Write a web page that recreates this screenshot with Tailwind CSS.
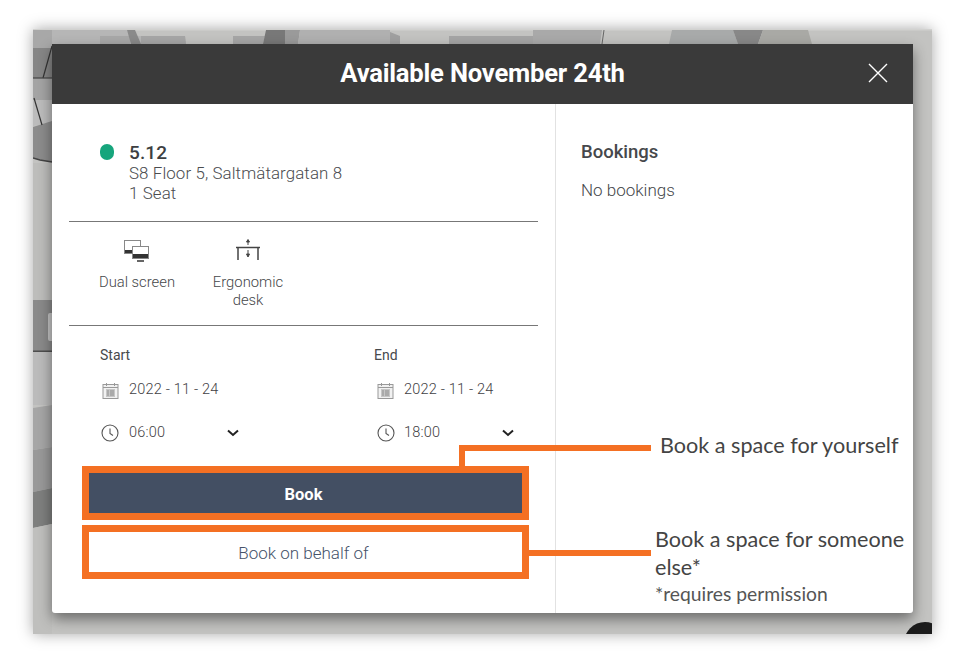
<!DOCTYPE html>
<html lang="en">
  <head>
    <meta charset="UTF-8" />
    <meta name="viewport" content="width=device-width, initial-scale=1.0" />
    <title>Available November 24th</title>
    <script src="https://cdn.jsdelivr.net/npm/@tailwindcss/browser@4"></script>
  </head>
  <body class="bg-white w-[964px] h-[658px] overflow-hidden pl-[33px] pt-[29px] font-['Roboto',sans-serif] text-[#3f3f3f]">
    <!-- screenshot frame, floor plan behind the dialog -->
    <div class="relative w-[899px] h-[605px] bg-[#c2c1bf] shadow-[0_0_14px_rgba(0,0,0,0.35)]">
      <svg class="absolute inset-0" width="899" height="605" viewBox="33 29 899 605">
        <rect x="33" y="29" width="899" height="605" fill="#c3c3c1" />
        <rect x="33" y="29" width="899" height="1.500" fill="#d2d2d0" />
        <polygon points="33,30 127,30 130,36 141,36 185,36 186,44 33,44" fill="#b6b6b6" />
        <polygon points="100,36 130,36 130,44 100,44" fill="#a8a8a8" />
        <polygon points="127,30 135,30 141,44 131,44" fill="#8a8a8a" />
        <polygon points="141,36 185,36 186,44 141,44" fill="#a6a6a6" />
        <polygon points="233,36 265,36 263,44 233,44" fill="#a6a6a6" />
        <polygon points="266,30 285,30 285,44 263,44" fill="#787878" />
        <polygon points="285,30 300,30 298,44 285,44" fill="#9a9a9a" />
        <polygon points="300,30 390,30 390,44 298,44" fill="#b0b0b0" />
        <polygon points="390,32 400,36 400,44 390,44" fill="#a0a0a0" />
        <polygon points="449,36 533,36 533,44 449,44" fill="#a5a5a5" />
        <polygon points="533,30 602,30 600,44 533,44" fill="#a9a9a9" />
        <line x1="604" y1="30" x2="602" y2="44" stroke="#666" stroke-width="1" />
        <polygon points="672,30 733,30 738,44 669,44" fill="#a8aaaa" />
        <polygon points="733,30 763,30 758,44 738,44" fill="#888888" />
        <polygon points="763,30 808,30 812,44 758,44" fill="#a9a9a5" />
        <rect x="33" y="30" width="19" height="18" fill="#a8a8a8" />
        <rect x="33" y="48" width="19" height="30" fill="#868686" />
        <polygon points="33,78 52,78 52,100 33,100" fill="#a4a4a4" />
        <polygon points="33,100 52,100 52,122 33,126" fill="#bcbcbc" />
        <line x1="52" y1="46" x2="43" y2="78" stroke="#333" stroke-width="1.200" />
        <line x1="33" y1="78" x2="52" y2="78" stroke="#444" stroke-width="1.200" />
        <polygon points="33,127 52,121 52,162 40,160 33,158" fill="#8c8c8c" />
        <line x1="34" y1="98" x2="42" y2="125" stroke="#333" stroke-width="1.200" />
        <polyline points="33,158 40,160 52,162" fill="none" stroke="#444" stroke-width="1.500" />
        <rect x="33" y="163" width="19" height="137" fill="#bdbdbb" />
        <rect x="33" y="300" width="19" height="51" fill="#8a8a8a" />
        <rect x="48" y="313" width="6" height="28" rx="2" fill="#c4c4c4" />
        <rect x="33" y="350.500" width="19" height="1.500" fill="#4e4e4e" />
        <rect x="33" y="352" width="19" height="53" fill="#bbbbbb" />
        <polygon points="33,408 52,405 52,447 33,450" fill="#a6a6a6" />
        <polygon points="33,450 52,447 52,488 33,492" fill="#999999" />
        <polygon points="33,492 52,488 52,524 33,528" fill="#7e7f7e" />
        <polygon points="33,528 52,524 52,634 33,634" fill="#bfbfbd" />
        <circle cx="925" cy="643" r="21" fill="#1c1c1c" />
      </svg>

      <!-- dialog -->
      <div class="absolute left-[19px] top-[15px] w-[861px] h-[569px] rounded-b-[3px] bg-white shadow-[0_6px_14px_rgba(0,0,0,0.45)] flex flex-col">
        <header class="relative h-[60px] shrink-0 bg-[#3a3a3a] flex items-center justify-center pb-[1px]">
          <h1 class="text-[25.600px] font-bold text-white tracking-[-0.2px]">Available November 24th</h1>
          <button class="absolute right-[25px] top-[19px]">
            <svg class="block" width="20" height="20" viewBox="0 0 20 20" fill="none" stroke="#fff" stroke-width="1.400"><path d="M1 1l18 18M19 1L1 19" /></svg>
          </button>
        </header>

        <div class="flex flex-1 min-h-0">
          <!-- left column -->
          <section class="w-[504px] border-r border-[#e2e2e2] pl-[17px]">
            <div class="w-[469px]">
              <div class="flex h-[118px] border-b border-[#777] pl-[31px] pt-[39px]">
                <span class="w-[14px] h-[16px] mt-[1px] rounded-full bg-[#16a57c]"></span>
                <div class="ml-[15px] leading-[20px] tracking-[0.1px] text-[#4a4c4f]">
                  <div class="text-[19px] font-medium text-[#3d3f42]">5.12</div>
                  <div class="text-[16.900px] font-light">S8 Floor 5, Saltmätargatan 8</div>
                  <div class="text-[16.900px] font-light">1 Seat</div>
                </div>
              </div>

              <div class="flex h-[104px] border-b border-[#777] text-[14.800px] leading-[18px] font-light text-[#45474a] text-center">
                <div class="w-[136px] pt-[18px] flex flex-col items-center">
                  <svg width="26" height="22" viewBox="0 0 26 22" fill="none">
                    <rect x="0.500" y="0.500" width="16" height="13" fill="#fff" stroke="#888" />
                    <rect x="1" y="10" width="15" height="3" fill="#333" />
                    <rect x="8.500" y="6.500" width="16" height="12" fill="#fff" stroke="#888" />
                    <rect x="9" y="14" width="15" height="4" fill="#333" />
                    <path d="M13 21h7" stroke="#333" stroke-width="1.500" />
                  </svg>
                  <span class="mt-[11px] whitespace-nowrap">Dual screen</span>
                </div>
                <div class="w-[86px] pt-[16px] flex flex-col items-center">
                  <svg width="26" height="24" viewBox="0 0 26 24" fill="none" stroke="#444">
                    <path d="M1 9.500h24" stroke-width="1.500" />
                    <path d="M3 10v12M23 10v12" stroke-width="1.500" />
                    <path d="M13 2v5M13 12v6" />
                    <path d="M11.500 4L13 1.500 14.500 4zM11.500 16l1.500 3 1.500-3z" fill="#444" />
                  </svg>
                  <span class="mt-[11px]">Ergonomic<br />desk</span>
                </div>
              </div>

              <div class="flex pl-[31px] pt-[20px] text-[14.500px] font-light text-[#3f4144]">
                <div class="w-[274px]">
                  <div class="leading-[18px] text-[14px] font-normal text-[#47494c]">Start</div>
                  <div class="flex items-center gap-[10px] mt-[16px] h-[20px] pl-[2px]">
                    <svg width="17" height="17" viewBox="0 0 17 17" fill="none" stroke="#999"><rect x="1" y="2.500" width="15" height="14" fill="#f1f1f1" /><path d="M1 5.500h15M4.500 1v3M12.500 1v3" /><path d="M4 8h9M4 10h9M4 12h9M4 14h9M6 8v6M9 8v6M11 8v6" stroke="#777" stroke-width="0.700" /></svg>
                    <span class="tracking-[0.2px]">2022 - 11 - 24</span>
                  </div>
                  <div class="flex items-center mt-[23px] h-[20px] pl-[1px]">
                    <svg width="18" height="18" viewBox="0 0 18 18" fill="none" stroke="#555" stroke-width="1.100"><circle cx="9" cy="9" r="8" /><path d="M9 4.500V9.500l3 2" /></svg>
                    <span class="ml-[10px] w-[98px] tracking-[0.2px]">06:00</span>
                    <svg width="12" height="8" viewBox="0 0 12 8" fill="none" stroke="#222" stroke-width="2"><path d="M1 1.500l5 4.500 5-4.500" /></svg>
                  </div>
                </div>
                <div>
                  <div class="leading-[18px] text-[14px] font-normal text-[#47494c]">End</div>
                  <div class="flex items-center gap-[10px] mt-[16px] h-[20px] pl-[3px]">
                    <svg width="17" height="17" viewBox="0 0 17 17" fill="none" stroke="#999"><rect x="1" y="2.500" width="15" height="14" fill="#f1f1f1" /><path d="M1 5.500h15M4.500 1v3M12.500 1v3" /><path d="M4 8h9M4 10h9M4 12h9M4 14h9M6 8v6M9 8v6M11 8v6" stroke="#777" stroke-width="0.700" /></svg>
                    <span class="tracking-[0.2px]">2022 - 11 - 24</span>
                  </div>
                  <div class="flex items-center mt-[23px] h-[20px] pl-[3px]">
                    <svg width="18" height="18" viewBox="0 0 18 18" fill="none" stroke="#555" stroke-width="1.100"><circle cx="9" cy="9" r="8" /><path d="M9 4.500V9.500l3 2" /></svg>
                    <span class="ml-[9px] w-[98px] tracking-[0.2px]">18:00</span>
                    <svg width="12" height="8" viewBox="0 0 12 8" fill="none" stroke="#222" stroke-width="2"><path d="M1 1.500l5 4.500 5-4.500" /></svg>
                  </div>
                </div>
              </div>
            </div>
          </section>

          <!-- right column -->
          <section class="flex-1 pl-[25px] pt-[38px]">
            <h2 class="text-[18.500px] leading-[20px] font-medium text-[#46484b]">Bookings</h2>
            <p class="mt-[18px] text-[17px] leading-[20px] font-light text-[#45474a]">No bookings</p>
          </section>
        </div>

        <!-- buttons with orange callout outlines -->
        <div class="absolute left-[30px] top-[422px] w-[447px] flex flex-col gap-[5px]">
          <button class="h-[54px] w-full border-[7px] border-[#f47023] bg-[#434f63] text-white text-[16.500px] font-bold pt-[5px] pr-[4px]">Book</button>
          <button class="h-[54px] w-full border-[7px] border-[#f47023] bg-white text-[#46536a] text-[17px] font-light pt-[4px] pr-[4px]">Book on behalf of</button>
        </div>

        <!-- callouts -->
        <div class="absolute left-[407px] top-[401px] w-[192px] h-[22px] border-t-[6px] border-l-[6px] border-[#f47023]"></div>
        <div class="absolute left-[476px] top-[506px] w-[123px] h-[6px] bg-[#f47023]"></div>
        <p class="absolute left-[608px] top-[386px] font-['Lato',sans-serif] text-[21.600px] leading-[30px] whitespace-nowrap text-[#444]">Book a space for yourself</p>
        <div class="absolute left-[603px] top-[481px] w-[258px] font-['Lato',sans-serif] text-[#444]">
          <p class="text-[21.600px] leading-[28px]">Book a space for someone else*</p>
          <p class="text-[19.300px] leading-[24px] text-[#555] mt-[1px]">*requires permission</p>
        </div>
      </div>
    </div>
  </body>
</html>
